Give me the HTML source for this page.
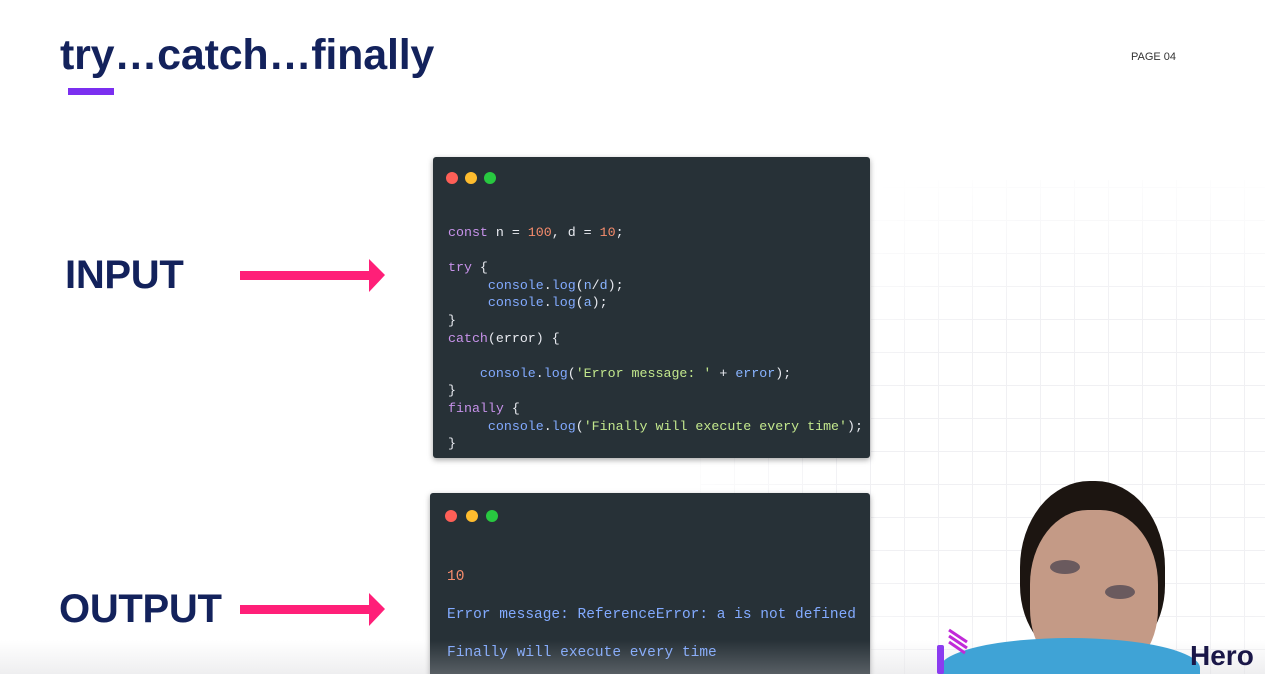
<!DOCTYPE html>
<html><head><style>
*{margin:0;padding:0;box-sizing:border-box}
html,body{width:1265px;height:674px;overflow:hidden}
body{position:relative;background:#fff;font-family:"Liberation Sans",sans-serif}
.grid{position:absolute;left:700px;top:180px;width:565px;height:494px;background-image:linear-gradient(#f0f0f3 1px,transparent 1px),linear-gradient(90deg,#f0f0f3 1px,transparent 1px);background-size:34px 33px;background-position:0 7px;-webkit-mask-image:radial-gradient(ellipse at 70% 60%,#000 40%,transparent 80%)}
.title{position:absolute;left:60px;top:31px;font-size:43px;font-weight:bold;color:#13225c;letter-spacing:-0.2px}
.bar{position:absolute;left:68px;top:88px;width:46px;height:7px;background:#7b2ff0}
.page{position:absolute;left:1131px;top:51px;font-size:11px;color:#333}
.lbl{position:absolute;font-size:40px;font-weight:bold;color:#13225c;letter-spacing:-0.3px}
.arrow{position:absolute;left:240px;height:9px;width:130px;background:#ff1f78}
.arrow:after{content:"";position:absolute;right:-15px;top:-12px;border-left:16px solid #ff1f78;border-top:16px solid transparent;border-bottom:17px solid transparent}
.panel{position:absolute;background:#273137;box-shadow:0 2px 6px rgba(0,0,0,.35);border-radius:3px}
.dots span{position:absolute;width:12px;height:12px;border-radius:50%}
pre{position:absolute;font-family:"Liberation Mono",monospace;font-size:13.3px;line-height:17.6px;color:#e8eaf0}
.k{color:#c792ea}.n{color:#f78c6c}.f{color:#82aaff}.s{color:#c3e88d}.v{color:#89b4ff}
.fade{position:absolute;left:0;top:640px;width:1265px;height:34px;background:linear-gradient(transparent,rgba(200,200,205,.3))}
</style></head><body>
<div class="grid"></div>
<div class="title">try…catch…finally</div>
<div class="bar"></div>
<div class="page">PAGE 04</div>
<div class="lbl" style="left:65px;top:253px">INPUT</div>
<div class="lbl" style="left:59px;top:587px">OUTPUT</div>
<div class="arrow" style="top:271px"></div>
<div class="arrow" style="top:605px"></div>

<div class="panel" style="left:433px;top:157px;width:437px;height:301px">
<div class="dots"><span style="left:13px;top:15px;background:#fe5f57"></span><span style="left:32px;top:15px;background:#febc2e"></span><span style="left:51px;top:15px;background:#28c840"></span></div>
<pre style="left:15px;top:67px"><span class="k">const</span> n = <span class="n">100</span>, d = <span class="n">10</span>;

<span class="k">try</span> {
     <span class="f">console</span>.<span class="f">log</span>(<span class="v">n</span>/<span class="v">d</span>);
     <span class="f">console</span>.<span class="f">log</span>(<span class="v">a</span>);
}
<span class="k">catch</span>(error) {

    <span class="f">console</span>.<span class="f">log</span>(<span class="s">'Error message: '</span> + <span class="v">error</span>);
}
<span class="k">finally</span> {
     <span class="f">console</span>.<span class="f">log</span>(<span class="s">'Finally will execute every time'</span>);
}</pre>
</div>

<div class="panel" style="left:430px;top:493px;width:440px;height:190px">
<div class="dots"><span style="left:15px;top:17px;background:#fe5f57"></span><span style="left:36px;top:17px;background:#febc2e"></span><span style="left:56px;top:17px;background:#28c840"></span></div>
<pre style="left:17px;top:65px;line-height:38px;font-size:14.5px;color:#82aaff"><span class="n">10</span>
Error message: ReferenceError: a is not defined
Finally will execute every time</pre>
</div>

<div class="fade"></div>
<div style="position:absolute;left:1020px;top:481px;width:145px;height:180px;border-radius:48% 48% 42% 42%;background:#1c1511"></div>
<div style="position:absolute;left:1030px;top:510px;width:128px;height:165px;border-radius:45% 45% 40% 40%;background:#c49a86"></div>
<div style="position:absolute;left:1050px;top:560px;width:30px;height:14px;border-radius:50%;background:#6a5a5e"></div>
<div style="position:absolute;left:1105px;top:585px;width:30px;height:14px;border-radius:50%;background:#6a5a5e"></div>
<div style="position:absolute;left:940px;top:638px;width:260px;height:60px;border-radius:50% 50% 0 0;background:#3fa3d6"></div>
<div style="position:absolute;left:937px;top:645px;width:7px;height:29px;background:#8b3cf0;border-radius:2px"></div>
<svg style="position:absolute;left:945px;top:628px" width="40" height="30"><g stroke="#c02ad8" stroke-width="3"><line x1="4" y1="2" x2="22" y2="14"/><line x1="4" y1="8" x2="22" y2="20"/><line x1="4" y1="14" x2="20" y2="25"/></g></svg>
<div style="position:absolute;left:1190px;top:640px;font-size:28px;font-weight:bold;color:#1a1748">Hero</div>
</body></html>
